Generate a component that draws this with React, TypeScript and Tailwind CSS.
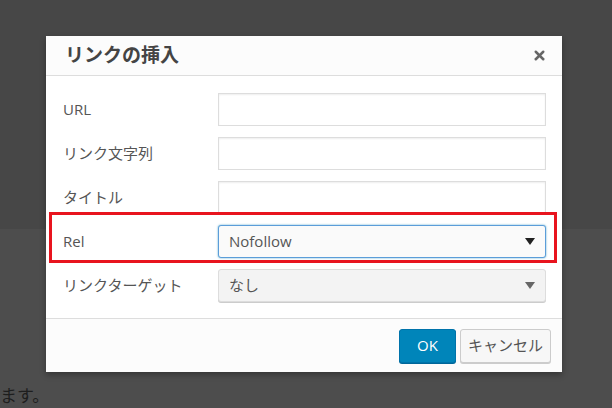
import { X } from 'lucide-react';

const font = { fontFamily: '"Open Sans", "Noto Sans CJK JP", sans-serif' };

function Row({ label, children }: { label: string; children: React.ReactNode }) {
  return (
    <div className="flex h-[33px] items-center">
      <label className="w-[155px] shrink-0 text-[15px] text-[#555]">{label}</label>
      {children}
    </div>
  );
}

function TextInput() {
  return <div className="h-full w-[328px] border border-[#ddd] bg-white shadow-[inset_0_1px_2px_rgba(0,0,0,0.07)]" />;
}

function Select({ value, focused }: { value: string; focused?: boolean }) {
  return (
    <div
      className={
        'flex h-full w-[328px] items-center justify-between rounded-[3px] pl-[10px] pr-[10px] text-[15px] text-[#555] ' +
        (focused
          ? 'border border-[#5b9dd9] bg-[#fafafa] shadow-[0_0_2px_rgba(30,140,190,0.8)]'
          : 'border border-[#ddd] bg-[#f3f3f3] shadow-[0_1px_0_#ccc]')
      }
    >
      <span>{value}</span>
      <svg width="10" height="7" viewBox="0 0 10 7" className={focused ? 'text-[#222]' : 'text-[#666]'}>
        <path d="M0 0h10L5 7z" fill="currentColor" />
      </svg>
    </div>
  );
}

export default function App() {
  return (
    <div className="relative h-[408px] w-[612px] overflow-hidden" style={font}>
      {/* Page under the overlay */}
      <div className="h-[229px] bg-[#474747]" />
      <div className="flex h-[179px] items-end bg-[#4d4d4d] pb-[1px]">
        <span className="text-[17px] leading-[22px] text-[#1e1e1e]">ます。</span>
      </div>

      {/* Dialog */}
      <div className="absolute left-[46px] top-[36px] w-[516px] bg-white shadow-[0_3px_6px_rgba(0,0,0,0.3)]">
        <div className="flex h-[40px] items-center justify-between border-b border-[#ddd] bg-[#fcfcfc] pl-[19px] pr-[15px]">
          <h1 className="text-[19px] font-bold text-[#444]">リンクの挿入</h1>
          <X className="h-[15px] w-[15px] text-[#666]" strokeWidth={4} />
        </div>

        <div className="relative flex flex-col gap-[11px] pb-[16px] pl-[17px] pt-[17px]">
          <Row label="URL">
            <TextInput />
          </Row>
          <Row label="リンク文字列">
            <TextInput />
          </Row>
          <Row label="タイトル">
            <TextInput />
          </Row>
          <Row label="Rel">
            <Select value="Nofollow" focused />
          </Row>
          <Row label="リンクターゲット">
            <Select value="なし" />
          </Row>

          {/* highlight box */}
          <div className="pointer-events-none absolute left-[3px] top-[136px] h-[51px] w-[508px] border-[3px] border-[#e8141e]" />
        </div>

        <div className="flex h-[54px] items-center justify-end gap-[4px] border-t border-[#ddd] bg-[#fcfcfc] pr-[11px]">
          <button className="h-[34px] w-[57px] rounded-[3px] border border-[#0073aa] bg-[#0085ba] text-[15px] text-white shadow-[0_1px_0_#006799]">
            OK
          </button>
          <button className="h-[34px] w-[91px] rounded-[3px] border border-[#ccc] bg-[#f7f7f7] text-[15px] text-[#555] shadow-[0_1px_0_#ccc]">
            キャンセル
          </button>
        </div>
      </div>
    </div>
  );
}
